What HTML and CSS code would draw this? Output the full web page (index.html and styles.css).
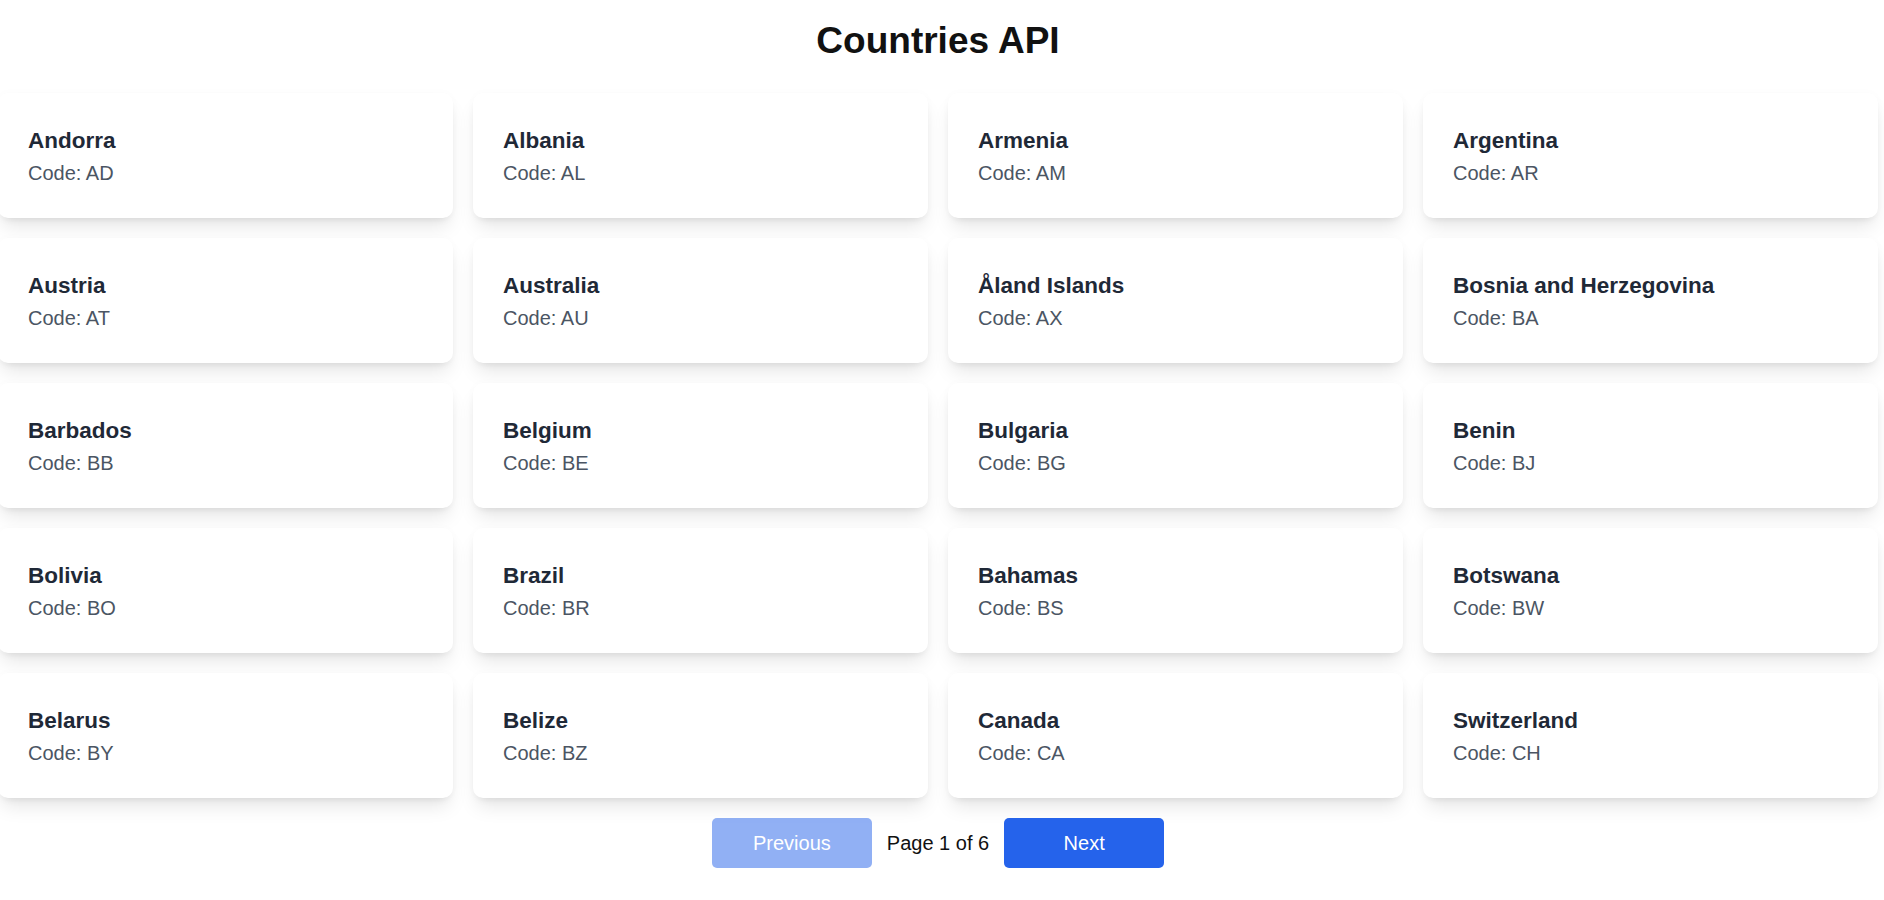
FILE: index.html
```html
<!DOCTYPE html>
<html lang="en">
<head>
<meta charset="utf-8">
<title>Countries API</title>
<link rel="stylesheet" href="styles.css">
</head>
<body>
<div class="page">
  <h1 class="title">Countries API</h1>
  <div class="grid">
    <div class="card"><div class="name">Andorra</div><div class="code">Code: AD</div></div>
    <div class="card"><div class="name">Albania</div><div class="code">Code: AL</div></div>
    <div class="card"><div class="name">Armenia</div><div class="code">Code: AM</div></div>
    <div class="card"><div class="name">Argentina</div><div class="code">Code: AR</div></div>
    <div class="card"><div class="name">Austria</div><div class="code">Code: AT</div></div>
    <div class="card"><div class="name">Australia</div><div class="code">Code: AU</div></div>
    <div class="card"><div class="name">Åland Islands</div><div class="code">Code: AX</div></div>
    <div class="card"><div class="name">Bosnia and Herzegovina</div><div class="code">Code: BA</div></div>
    <div class="card"><div class="name">Barbados</div><div class="code">Code: BB</div></div>
    <div class="card"><div class="name">Belgium</div><div class="code">Code: BE</div></div>
    <div class="card"><div class="name">Bulgaria</div><div class="code">Code: BG</div></div>
    <div class="card"><div class="name">Benin</div><div class="code">Code: BJ</div></div>
    <div class="card"><div class="name">Bolivia</div><div class="code">Code: BO</div></div>
    <div class="card"><div class="name">Brazil</div><div class="code">Code: BR</div></div>
    <div class="card"><div class="name">Bahamas</div><div class="code">Code: BS</div></div>
    <div class="card"><div class="name">Botswana</div><div class="code">Code: BW</div></div>
    <div class="card"><div class="name">Belarus</div><div class="code">Code: BY</div></div>
    <div class="card"><div class="name">Belize</div><div class="code">Code: BZ</div></div>
    <div class="card"><div class="name">Canada</div><div class="code">Code: CA</div></div>
    <div class="card"><div class="name">Switzerland</div><div class="code">Code: CH</div></div>
  </div>
  <div class="pager">
    <button class="btn btn-disabled" disabled>Previous</button>
    <span class="page-info">Page 1 of 6</span>
    <button class="btn">Next</button>
  </div>
</div>
</body>
</html>
```

FILE: styles.css
```css
html, body {
  margin: 0;
  padding: 0;
  background: #ffffff;
}
body {
  font-family: "Liberation Sans", Arial, sans-serif;
  overflow: hidden;
}
.page {
  width: 1880px;
  margin-left: -2px;
  padding-top: 18px;
}
.title {
  margin: 0 0 30px 0;
  text-align: center;
  font-size: 37px;
  line-height: 45px;
  font-weight: 700;
  color: #111111;
}
.grid {
  display: grid;
  grid-template-columns: repeat(4, 1fr);
  gap: 20px;
}
.card {
  background: #ffffff;
  border-radius: 10px;
  padding: 30px;
  box-shadow: 0 12px 19px -4px rgba(0,0,0,0.1), 0 5px 8px -5px rgba(0,0,0,0.1), 0 0 10px rgba(0,0,0,0.02);
}
.name {
  font-size: 22.5px;
  line-height: 35px;
  font-weight: 700;
  color: #1f2937;
}
.code {
  font-size: 20px;
  line-height: 30px;
  color: #4b5563;
}
.pager {
  display: flex;
  justify-content: center;
  align-items: center;
  gap: 15px;
  margin-top: 20px;
}
.btn {
  width: 160px;
  height: 50px;
  border: 0;
  border-radius: 5px;
  background: #2563eb;
  color: #ffffff;
  font-family: "Liberation Sans", Arial, sans-serif;
  font-size: 20px;
  line-height: 30px;
  padding: 10px 0;
  cursor: pointer;
}
.btn-disabled {
  opacity: 0.5;
  cursor: not-allowed;
}
.page-info {
  font-size: 20px;
  line-height: 30px;
  color: #111111;
}
```
